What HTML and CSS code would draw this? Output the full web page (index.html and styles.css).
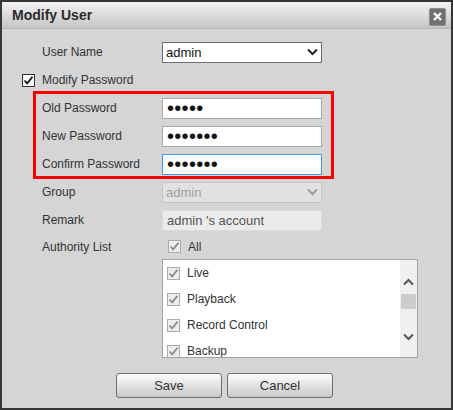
FILE: index.html
```html
<!DOCTYPE html>
<html>
<head>
  <title>Modify User</title>
  <link rel="stylesheet" href="styles.css">
</head>

<body>
  <div class="dialog">
    <div class="titlebar">
      <span class="title">Modify User</span>
      <button class="close" type="button" title="Close">
        <svg width="9" height="9" viewBox="0 0 9 9"><path d="M1 1 L8 8 M8 1 L1 8" stroke="#fff" stroke-width="2.4" fill="none"/></svg>
      </button>
    </div>

    <form class="form">
      <div class="row">
        <label class="label">User Name</label>
        <div class="select-wrap">
          <select class="field select"><option>admin</option></select>
          <svg class="chevron" width="11" height="8" viewBox="0 0 11 8"><path d="M1 1.5 L5.5 6 L10 1.5" stroke="#222" stroke-width="2" fill="none"/></svg>
        </div>
      </div>

      <div class="row row-check">
        <span class="check">
          <svg width="11" height="11" viewBox="0 0 11 11"><path d="M1.5 5.5 L4.2 8.3 L9.5 1.8" stroke="#111" stroke-width="1.8" fill="none"/></svg>
        </span>
        <label class="label">Modify Password</label>
      </div>

      <div class="pw-group">
        <div class="row">
          <label class="label">Old Password</label>
          <input class="field pw" type="password" value="12345">
        </div>
        <div class="row">
          <label class="label">New Password</label>
          <input class="field pw" type="password" value="1234567">
        </div>
        <div class="row">
          <label class="label">Confirm Password</label>
          <input class="field pw" type="password" value="1234567" autofocus>
        </div>
      </div>

      <div class="row">
        <label class="label">Group</label>
        <div class="select-wrap">
          <select class="field select" disabled><option>admin</option></select>
          <svg class="chevron" width="11" height="8" viewBox="0 0 11 8"><path d="M1 1.5 L5.5 6 L10 1.5" stroke="#9a9a9a" stroke-width="2" fill="none"/></svg>
        </div>
      </div>

      <div class="row">
        <label class="label">Remark</label>
        <input class="field" type="text" value="admin 's account" disabled>
      </div>

      <div class="row row-all">
        <label class="label">Authority List</label>
        <span class="check check-off">
          <svg width="11" height="11" viewBox="0 0 11 11"><path d="M1.5 5.5 L4.2 8.3 L9.5 1.8" stroke="#8a8a8a" stroke-width="1.8" fill="none"/></svg>
        </span>
        <span class="item-text">All</span>
      </div>

      <div class="authority-list">
        <div class="items">
          <div class="item">
            <span class="check check-off"><svg width="11" height="11" viewBox="0 0 11 11"><path d="M1.5 5.5 L4.2 8.3 L9.5 1.8" stroke="#8a8a8a" stroke-width="1.8" fill="none"/></svg></span>
            <span class="item-text">Live</span>
          </div>
          <div class="item">
            <span class="check check-off"><svg width="11" height="11" viewBox="0 0 11 11"><path d="M1.5 5.5 L4.2 8.3 L9.5 1.8" stroke="#8a8a8a" stroke-width="1.8" fill="none"/></svg></span>
            <span class="item-text">Playback</span>
          </div>
          <div class="item">
            <span class="check check-off"><svg width="11" height="11" viewBox="0 0 11 11"><path d="M1.5 5.5 L4.2 8.3 L9.5 1.8" stroke="#8a8a8a" stroke-width="1.8" fill="none"/></svg></span>
            <span class="item-text">Record Control</span>
          </div>
          <div class="item">
            <span class="check check-off"><svg width="11" height="11" viewBox="0 0 11 11"><path d="M1.5 5.5 L4.2 8.3 L9.5 1.8" stroke="#8a8a8a" stroke-width="1.8" fill="none"/></svg></span>
            <span class="item-text">Backup</span>
          </div>
        </div>
        <div class="scrollbar">
          <svg class="arrow-up" width="11" height="8" viewBox="0 0 11 8"><path d="M1 6.5 L5.5 2 L10 6.5" stroke="#555" stroke-width="2" fill="none"/></svg>
          <div class="thumb"></div>
          <svg class="arrow-down" width="11" height="8" viewBox="0 0 11 8"><path d="M1 1.5 L5.5 6 L10 1.5" stroke="#555" stroke-width="2" fill="none"/></svg>
        </div>
      </div>

      <div class="buttons">
        <button class="btn" type="button">Save</button>
        <button class="btn" type="button">Cancel</button>
      </div>
    </form>
  </div>
</body>
</html>
```

FILE: styles.css
```css
body {
  margin: 0;
  font-family: "Liberation Sans", Arial, sans-serif;
  background: #d5d5d5;
}

.dialog {
  width: 453px;
  height: 410px;
  box-sizing: border-box;
  border: 2px solid #363636;
  background: #d5d5d5;
}

.titlebar {
  height: 27px;
  box-sizing: border-box;
  border-bottom: 1px solid #b8b8b8;
  background: linear-gradient(#f2f2f2, #c5c5c5);
  display: flex;
  align-items: center;
  justify-content: space-between;
  padding: 0 5px 0 10px;
}

.title {
  font-size: 14px;
  font-weight: bold;
  color: #2b2b2b;
}

.close {
  width: 17px;
  height: 18px;
  margin-top: 3px;
  padding: 0;
  border: 1px solid #8e8e8e;
  border-radius: 2px;
  background: #707070;
  display: flex;
  align-items: center;
  justify-content: center;
}

.form {
  padding: 9px 0 0 40px;
}

.row {
  display: flex;
  align-items: center;
  height: 28px;
}

.label {
  width: 120px;
  font-size: 12px;
  color: #333;
}

.field {
  width: 160px;
  height: 21px;
  box-sizing: border-box;
  margin: 0;
  border: 1px solid #a9a9a9;
  border-radius: 0;
  background: #fff;
  padding: 0 4px;
  font-family: "Liberation Sans", Arial, sans-serif;
  font-size: 13px;
  color: #111;
  outline: none;
}

.field:focus {
  border-color: #3a9bf0;
}

.field:disabled {
  background: #ebebeb;
  border-color: #dcdcdc;
  color: #555;
}

.select-wrap {
  position: relative;
  display: flex;
}

.select {
  appearance: none;
  -webkit-appearance: none;
  border-color: #6e6e6e;
  padding-left: 3px;
}

.select:disabled {
  background: #e6e6e6;
  border-color: #bcbcbc;
  color: #8a8a8a;
}

.chevron {
  position: absolute;
  right: 4px;
  top: 6px;
  pointer-events: none;
}

.pw {
  font-size: 20px;
  line-height: 19px;
  letter-spacing: 0.3px;
  padding: 1px 0 0 4px;
}

.pw-group {
  position: relative;
}

.pw-group::after {
  content: "";
  position: absolute;
  top: -3px;
  bottom: -1px;
  left: -9px;
  width: 301px;
  box-sizing: border-box;
  border: 3px solid #f00;
  pointer-events: none;
}

.row-check {
  margin-left: -20px;
}

.row-check .check {
  margin-right: 7px;
}

.check {
  width: 13px;
  height: 13px;
  box-sizing: border-box;
  border: 1px solid #333;
  background: #fff;
  display: flex;
  align-items: center;
  justify-content: center;
}

.check-off {
  border-color: #ababab;
  background: #ececec;
}

.row-all {
  height: 25px;
}

.row-all .check {
  margin-left: 6px;
}

.item-text {
  margin-left: 7px;
  font-size: 12px;
  color: #333;
}

.authority-list {
  width: 256px;
  height: 99px;
  box-sizing: border-box;
  margin-left: 120px;
  border: 1px solid #a3a3a3;
  background: #fff;
  display: flex;
}

.items {
  flex: 1;
  overflow: hidden;
  padding: 0 0 0 4px;
}

.item {
  height: 26px;
  display: flex;
  align-items: center;
}

.scrollbar {
  width: 17px;
  background: #f0f0f0;
  display: flex;
  flex-direction: column;
  align-items: center;
}

.arrow-up {
  margin-top: 18px;
}

.thumb {
  width: 15px;
  height: 15px;
  margin-top: 8px;
  background: #cdcdcd;
}

.arrow-down {
  margin-top: 24px;
}

.buttons {
  display: flex;
  gap: 5px;
  margin: 15px 0 0 74px;
}

.btn {
  width: 106px;
  height: 25px;
  border: 1px solid #6f6f6f;
  border-radius: 3px;
  background: linear-gradient(#fdfdfd, #c9c9c9);
  font-family: "Liberation Sans", Arial, sans-serif;
  font-size: 13px;
  color: #333;
}
```
